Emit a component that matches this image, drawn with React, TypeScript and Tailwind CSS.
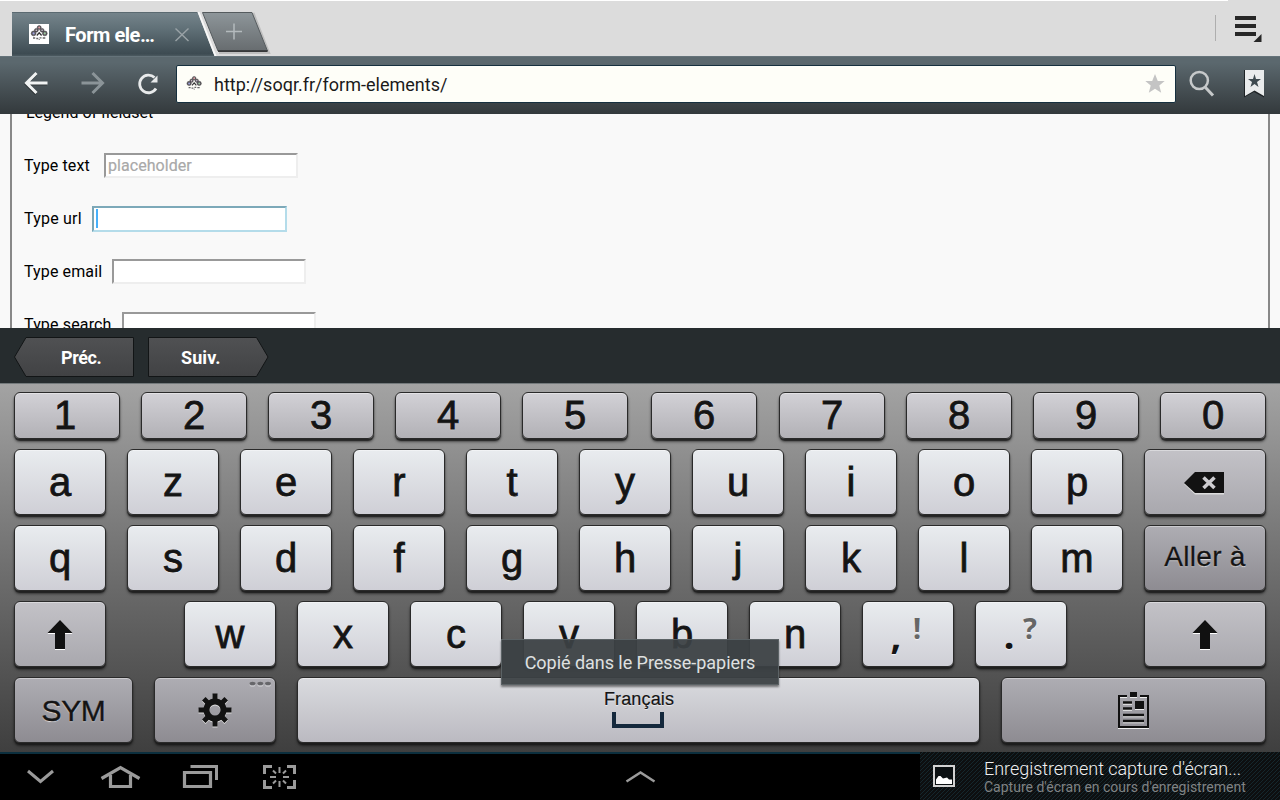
import type { ReactNode } from "react";

function Favicon({ className }: { className: string }) {
  return (
    <svg viewBox="0 0 20 20" className={className} aria-hidden="true">
      <g fill="#5a565c" stroke="#3a383c" strokeWidth="0.5">
        <circle cx="10.2" cy="3.6" r="2" />
        <circle cx="7.3" cy="6.3" r="1.9" />
        <circle cx="13.1" cy="6.3" r="1.9" />
        <circle cx="4.6" cy="9.4" r="2.4" />
        <circle cx="15.8" cy="9.4" r="2.4" />
      </g>
      <g>
        <circle cx="10.2" cy="3.6" r="1" fill="#e0a0a4" />
        <circle cx="7.3" cy="6.3" r="0.8" fill="#d9c8d0" />
        <circle cx="13.1" cy="6.3" r="0.8" fill="#cfc6d6" />
        <circle cx="4.6" cy="9.4" r="1.1" fill="#9aa0d8" />
        <circle cx="15.8" cy="9.4" r="1.1" fill="#9cc79e" />
      </g>
      <path d="M7.800 11.500L10.200 8.800L12.600 11.500" fill="none" stroke="#333" strokeWidth="1.300" />
      <path d="M4 14h2.200M7.300 14.500h2M10.500 13.800h2M13.700 14h2.600M10.300 15.300v.8" stroke="#666" strokeWidth="1.300" />
    </svg>
  );
}

function TabBar() {
  return (
    <header className="relative flex h-14 bg-[#dcdcdc]">
      <span className="absolute left-0 top-0 h-px w-[1228px] bg-white" />
      <div className="relative ml-3 h-14 w-[203px]">
        <svg className="absolute left-0 top-3 h-11 w-[262px]" viewBox="0 0 262 44" aria-hidden="true">
          <defs>
            <linearGradient id="tab" x1="0" y1="0" x2="0" y2="1">
              <stop offset="0" stopColor="#76858c" />
              <stop offset="0.4" stopColor="#5f6f76" />
              <stop offset="0.95" stopColor="#3d4b52" />
              <stop offset="1" stopColor="#4c5a60" />
            </linearGradient>
            <linearGradient id="newTab" x1="0" y1="0" x2="0" y2="1">
              <stop offset="0" stopColor="#8e969a" />
              <stop offset="1" stopColor="#676c6f" />
            </linearGradient>
          </defs>
          <path d="M0 0H185.500L202.500 44H0Z" fill="url(#tab)" />
          <path d="M0 .500H185.500" stroke="#5b6a71" />
          <path d="M185.500 0L202.500 44H204.500L187.500 0Z" fill="#f8f8f8" />
          <path d="M241 1L256.500 40.500H207" fill="none" stroke="#0002" strokeWidth="3" />
          <path d="M190.500 .500H240L255.500 39H206Z" fill="url(#newTab)" stroke="#555b5e" />
          <path d="M206 39.200H255.500" stroke="#1c1c1c" strokeWidth="1.200" />
          <path d="M222 11.500V27.500M214 19.500H230" stroke="#b4babd" strokeWidth="1.500" />
          <path d="M163.500 16.500L176.500 29M176.500 16.500L163.500 29" stroke="#9aa3a7" strokeWidth="1.400" />
        </svg>
        <div className="relative flex h-full items-center pt-[12px]">
          <Favicon className="ml-[17px] size-5 bg-white" />
          <span className="ml-4 pt-px text-[20px] font-bold leading-6 tracking-[-0.45px] text-white">Form ele…</span>
        </div>
      </div>
      <div className="ml-auto mr-[17px] flex pt-[15px]">
        <span className="mr-[19px] h-[26px] w-px bg-[#aeaeae]" />
        <svg className="h-7 w-[28px]" viewBox="0 0 28 28" aria-hidden="true">
          <path d="M0 3H21M0 11H21M0 19H21" stroke="#272727" strokeWidth="4" />
          <path d="M26.500 19V27H18.500Z" fill="#272727" />
        </svg>
      </div>
    </header>
  );
}

function Toolbar() {
  return (
    <div className="flex h-[58px] items-center border-t border-[#65737a] bg-linear-to-b from-[#5b686e] from-10% to-[#33393c]">
      <svg className="h-full w-[176px] shrink-0" viewBox="0 57 176 57" fill="none" aria-hidden="true">
        <path d="M47.500 83H27M36.500 73L26.500 83L36.500 93" stroke="#0005" strokeWidth="3" transform="translate(-0.500 1)" />
        <path d="M47.500 83H27M36.500 73L26.500 83L36.500 93" stroke="#f1f3f3" strokeWidth="3" />
        <path d="M81.500 83H102M92.500 73L102.500 83L92.500 93" stroke="#8b9498" strokeWidth="3" />
        <path d="M154.500 77.500A8.800 8.800 0 1 0 156 88.500" stroke="#e8eaeb" strokeWidth="2.800" />
        <path d="M157.500 75.500V82.500H150.500Z" fill="#e8eaeb" />
      </svg>
      <div className="mb-[3px] flex h-[38px] grow items-center rounded-[2px] border border-[#16303f] bg-[#fefef8] pl-2">
        <Favicon className="size-[18px]" />
        <span className="ml-[11px] grow text-[18px] tracking-[0.01px] text-[#1a1a1a]">http://soqr.fr/form-elements/</span>
        <svg className="mr-[9px] size-[22px]" viewBox="0 0 22 22" aria-hidden="true">
          <path d="M11 1L13.800 8H20.700L15.300 12.600L17.200 19.800L11 15.700L4.800 19.800L6.700 12.600L1.300 8H8.200Z" fill="#c4c4c4" />
        </svg>
      </div>
      <svg className="h-full w-[104px] shrink-0" viewBox="1176 57 104 57" fill="none" aria-hidden="true">
        <circle cx="1199.300" cy="80.500" r="8.600" stroke="#c6c9ca" strokeWidth="2.500" />
        <path d="M1205.500 87.500L1213 95.500" stroke="#c6c9ca" strokeWidth="3" />
        <path d="M1244 69H1264V96.500L1254 91L1244 96.500Z" fill="#1d2225" transform="translate(0 1)" />
        <path d="M1245 70H1264V96L1254.500 90.500L1245 96Z" fill="#e9ebec" />
        <path d="M1254.500 74L1256 79H1261L1257 82L1258.500 87L1254.500 84L1250.500 87L1252 82L1248 79H1253Z" fill="#3d494f" />
      </svg>
    </div>
  );
}

function FormRow({ label, labelClass, children }: { label: string; labelClass: string; children?: ReactNode }) {
  return (
    <div className="flex h-[53px] shrink-0 items-center">
      <label className={`whitespace-nowrap text-[16px] ${labelClass}`}>{label}</label>
      {children}
    </div>
  );
}

function Field({ text }: { text?: string }) {
  return (
    <div className="flex h-[25px] w-[194px] items-center border-2 border-b-[#eee] border-l-[#999] border-r-[#eee] border-t-[#999] bg-white pl-0.5 text-[16px] tracking-[0.05px] text-[#a9a9a9] [-webkit-text-stroke:0.2px_#a9a9a9]">
      {text}
    </div>
  );
}

function Page() {
  return (
    <main className="h-[214px] overflow-hidden bg-[#f9f9f9] px-2.5 text-black">
      <div className="-mt-7 flex flex-col border-x-2 border-l-[#888] border-r-[#888] pl-3">
        <FormRow label="Legend of fieldset" labelClass="ml-0.5" />
        <FormRow label="Type text" labelClass="w-20 tracking-[0.1px]"><Field text="placeholder" /></FormRow>
        <FormRow label="Type url" labelClass="w-[68px] tracking-[0.2px]">
          <div className="flex h-[26px] w-[195px] items-center border-2 border-b-[#b4dcea] border-l-[#7aa5b5] border-r-[#b4dcea] border-t-[#7da9b9] bg-white pl-0.5">
            <span className="h-[19px] w-0.5 bg-[#46b0fb]" />
          </div>
        </FormRow>
        <FormRow label="Type email" labelClass="w-[88px] tracking-[0.12px]"><Field /></FormRow>
        <FormRow label="Type search" labelClass="w-[98px] tracking-[0.15px]"><Field /></FormRow>
      </div>
    </main>
  );
}

function FormNavigation() {
  return (
    <nav className="h-[55px] bg-[#262c2e] pl-3.5 pt-[9px] text-[18px] font-bold text-white">
      <div className="relative flex h-10 w-[255px] items-center">
        <svg className="absolute inset-0 h-10 w-[255px]" viewBox="0 0 255 40" aria-hidden="true">
          <defs>
            <linearGradient id="nav" x1="0" y1="0" x2="0" y2="1">
              <stop offset="0" stopColor="#505153" />
              <stop offset="1" stopColor="#414244" />
            </linearGradient>
          </defs>
          <path d="M12 .500H119.500V39.500H12L.500 20Z" fill="url(#nav)" stroke="#121516" strokeLinejoin="round" />
          <path d="M134.500 .500H242.500L254 20L242.500 39.500H134.500Z" fill="url(#nav)" stroke="#121516" strokeLinejoin="round" />
        </svg>
        <span className="relative ml-[47px] w-[120px] tracking-[-0.4px]">Préc.</span>
        <span className="relative tracking-[0.1px]">Suiv.</span>
      </div>
    </nav>
  );
}

const keyBase =
  "flex shrink-0 items-center justify-center rounded-[6px] border border-[#2a2a2a] bg-linear-to-b text-[#141414] [text-shadow:0_1px_1px_#ffffffb0] shadow-[0_2px_1px_#1c1c1ccc,0_3px_3px_#0007,inset_0_1px_0_#ffffff60]";
const letterTone = "from-[#e9ecef] to-[#cfcfd6] h-[66px]";
const midTone = "from-[#c3c2c7] to-[#a9a8ae] h-[66px]";
const darkTone = "from-[#aeadb3] to-[#8e8c92] h-[66px]";
const keyText = "text-[40px] leading-none [-webkit-text-stroke:0.8px_#141414]";

function Key({ tone, className, children }: { tone: string; className: string; children?: ReactNode }) {
  return <button className={`${keyBase} ${tone} ${className}`}>{children}</button>;
}

function Letters({ value }: { value: string }) {
  return (
    <div className="flex gap-[21px]">
      {value.split("").map((letter) => (
        <Key key={letter} tone={letterTone} className={`w-[92px] ${keyText}`}>{letter}</Key>
      ))}
    </div>
  );
}

function ShiftIcon() {
  return (
    <svg className="mt-0.5 h-[31px] w-[26px]" viewBox="0 0 26 31" aria-hidden="true">
      <path d="M13 1L25.500 14H18V30H8V14H.500Z" fill="#fff" />
      <path d="M13 0L25.500 13H18V29H8V13H.500Z" fill="#111" />
    </svg>
  );
}

function GearShape({ color }: { color: string }) {
  return (
    <g fill="none" stroke={color}>
      <circle cx="17" cy="17" r="8.500" strokeWidth="6" />
      <path d="M17 .500V7M17 27V33.500M.500 17H7M27 17H33.500M5.800 5.800L10 10M24 24L28.200 28.200M28.200 5.800L24 10M5.800 28.200L10 24" strokeWidth="5" />
    </g>
  );
}

function ClipboardShape({ color }: { color: string }) {
  return (
    <g fill="none" stroke={color} strokeWidth="2">
      <path d="M9 4H1V35H30V4H22" />
      <path d="M5 10.500H14M5 16.500H14M5 23H26M5 29H26" strokeWidth="2.600" />
      <path d="M12 0H19V5H12ZM17 9H26V17H17Z" fill={color} stroke="none" />
    </g>
  );
}

function PunctuationKey({ main, alt }: { main: string; alt: string }) {
  return (
    <Key tone={letterTone} className="w-[92px] font-['Noto_Sans',sans-serif]">
      <span className="w-[14px] text-center text-[38px] font-bold leading-none">{main}</span>
      <span className="-mt-[13px] ml-1 w-[20px] text-center text-[29px] font-bold leading-none text-[#666]">{alt}</span>
    </Key>
  );
}

function Keyboard() {
  return (
    <section className="flex h-[369px] flex-col border-t border-[#73797b] bg-linear-to-b from-[#a3a3a3] to-[#3f3f3f] px-3.5 pt-2 font-['Liberation_Sans',sans-serif]">
      <div className="flex gap-[21px]">
        {"1234567890".split("").map((digit) => (
          <Key key={digit} tone="from-[#d2d1d6] to-[#b2b1b6] h-[47px]" className={`w-[106px] pb-0.5 ${digit === "1" ? "pr-1" : "pr-0"} ${digit === "6" ? "ml-0.5" : digit === "7" ? "ml-px" : "ml-0"} ${keyText}`}>{digit}</Key>
        ))}
      </div>
      <div className="mt-[10px] flex justify-between">
        <Letters value="azertyuiop" />
        <Key tone={midTone} className="w-[122px]">
          <svg className="mr-0.5 mt-[3px] h-6 w-10" viewBox="0 0 40 24" aria-hidden="true">
            <path d="M0 12L11 2H40V22.500H11Z" fill="#ddd" />
            <path d="M0 11L11 0H40V21H11Z" fill="#121212" />
            <path d="M19.500 5.500L30.500 16M30.500 5.500L19.500 16" stroke="#cdccd0" strokeWidth="3.600" />
          </svg>
        </Key>
      </div>
      <div className="mt-[10px] flex justify-between">
        <Letters value="qsdfghjklm" />
        <Key tone={darkTone} className="w-[122px] pb-[2px] text-[28px] tracking-[0.3px] [-webkit-text-stroke:0.3px_#141414]">Aller à</Key>
      </div>
      <div className="mt-[10px] flex">
        <Key tone={midTone} className="mr-[78px] w-[92px]"><ShiftIcon /></Key>
        <Letters value="wxcvbn" />
        <div className="ml-[21px] flex gap-[21px]">
          <PunctuationKey main="," alt="!" />
          <PunctuationKey main="." alt="?" />
        </div>
        <Key tone={midTone} className="ml-auto w-[122px]"><ShiftIcon /></Key>
      </div>
      <div className="mt-[10px] flex justify-between">
        <Key tone={darkTone} className="w-[119px] text-[30px] tracking-[-0.4px] [-webkit-text-stroke:0.4px_#141414]">SYM</Key>
        <Key tone={darkTone} className="relative w-[122px]">
          <svg className="mt-px mr-px h-[35px] w-[34px]" viewBox="0 0 34 35" aria-hidden="true">
            <g transform="translate(0 1)"><GearShape color="#ddd" /></g>
            <GearShape color="#121212" />
          </svg>
          <svg className="absolute right-[3px] top-[3px] h-[6px] w-[23px]" viewBox="0 0 23 6" aria-hidden="true">
            <g fill="#c8c8cc"><ellipse cx="3.500" cy="3.500" rx="3" ry="2.300" /><ellipse cx="11.300" cy="3.500" rx="3" ry="2.300" /><ellipse cx="19" cy="3.500" rx="3" ry="2.300" /></g>
            <g fill="#66666a"><ellipse cx="3.500" cy="2.500" rx="3" ry="1.800" /><ellipse cx="11.300" cy="2.500" rx="3" ry="1.800" /><ellipse cx="19" cy="2.500" rx="3" ry="1.800" /></g>
          </svg>
        </Key>
        <Key tone="from-[#dadbdf] to-[#bbbac1] h-[66px]" className="w-[683px] flex-col pb-[3px] pl-px">
          <span className="text-[18px] leading-5 tracking-[0.15px] [-webkit-text-stroke:0.2px_#141414]">Français</span>
          <span className="mr-0.5 mt-[3px] h-4 w-[52px] border-4 border-t-0 border-[#14283c]" />
        </Key>
        <Key tone={darkTone} className="w-[265px]">
          <svg className="h-[37px] w-[31px]" viewBox="0 0 31 37" aria-hidden="true">
            <g transform="translate(0 1)"><ClipboardShape color="#eee" /></g>
            <ClipboardShape color="#111" />
          </svg>
        </Key>
      </div>
    </section>
  );
}

function SystemBar() {
  return (
    <footer className="flex h-12 bg-black">
      <svg className="h-12 w-[920px] shrink-0 border-t-2 border-[#0c2f3e]" viewBox="0 754 920 46" fill="none" stroke="#9b9b9b" strokeWidth="3" aria-hidden="true">
        <path d="M28 771L40.500 781.500L53 771" />
        <path d="M101.500 778.500L120.500 767.500L139.500 778.500" strokeWidth="3.200" />
        <path d="M110.500 775V786.500H130.500V775" strokeWidth="3.200" />
        <path d="M184.500 772.500H210.500V786.500H184.500Z" strokeWidth="3.200" />
        <path d="M190.500 766.500H216.500V780" />
        <path d="M264.500 774V766.500H272M287 766.500H294.500V774M294.500 780V787.500H287M272 787.500H264.500V780" />
        <path d="M279.500 767V773M279.500 781V787M270 777H276M283 777H289M273 770.500L276 773.500M286 770.500L283 773.500M273 783.500L276 780.500M286 783.500L283 780.500" strokeWidth="2" />
        <path d="M626.500 781.500L640.500 772.500L654.500 781.500" strokeWidth="2.500" />
      </svg>
      <div className="flex grow items-center bg-[repeating-linear-gradient(135deg,#0d0f10_0,#0d0f10_2px,#15272d_2px,#15272d_2.828px)]">
        <svg className="ml-[13px] size-[22px]" viewBox="0 0 22 22" aria-hidden="true">
          <path d="M1 1H21V21H1Z" fill="#0b1012" stroke="#d2d2d2" strokeWidth="2" />
          <path d="M3 19V14.500L5.500 11H7.500L10 13.500L14 12.500L16 14.500H19V19Z" fill="#fff" />
        </svg>
        <div className="ml-[29px] whitespace-nowrap pt-0.5">
          <div className="text-[18px] font-light leading-5 tracking-[-0.04px] text-[#f0f0f0]">Enregistrement capture d'écran...</div>
          <div className="text-[14px] leading-4 text-[#808384]">Capture d'écran en cours d'enregistrement</div>
        </div>
      </div>
    </footer>
  );
}

export default function App() {
  return (
    <div className="relative h-[800px] w-[1280px] overflow-hidden bg-black font-[Roboto,sans-serif]">
      <TabBar />
      <Toolbar />
      <Page />
      <FormNavigation />
      <Keyboard />
      <SystemBar />
      <div className="absolute left-[501px] top-[639px] flex h-[46px] w-[278px] items-center justify-center border border-[#5b6265] bg-[#3b4144]/94 text-[18px] tracking-[-0.04px] text-[#dfe0e0] shadow-[0_2px_2px_#0007]">
        Copié dans le Presse-papiers
      </div>
    </div>
  );
}
